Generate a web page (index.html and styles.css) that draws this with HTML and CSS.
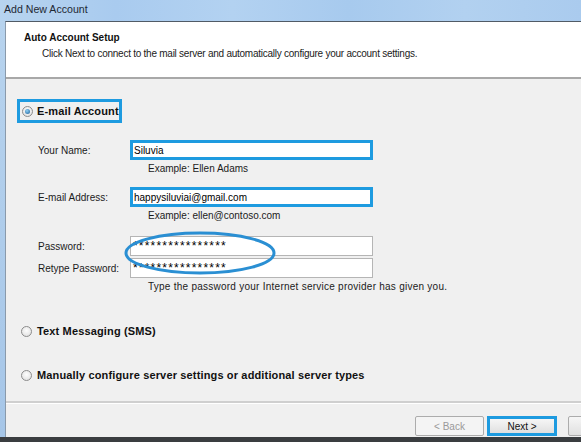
FILE: index.html
```html
<!DOCTYPE html>
<html>
<head>
<meta charset="utf-8">
<link rel="stylesheet" href="styles.css">
</head>
<body>
<div class="titlebar"><span class="title">Add New Account</span></div>
<div class="frame">
  <div class="dialog">
    <div class="header">
      <div class="h-title">Auto Account Setup</div>
      <div class="h-sub">Click Next to connect to the mail server and automatically configure your account settings.</div>
    </div>
    <div class="body">
      <div class="opt-email"><span class="radio checked"></span><span class="opt-label">E-mail Account</span></div>
      <div class="form">
        <div class="row r-name"><span class="lbl">Your Name:</span><span class="inp hl">Siluvia</span></div>
        <div class="hint">Example: Ellen Adams</div>
        <div class="row r-mail"><span class="lbl">E-mail Address:</span><span class="inp hl">happysiluviai@gmail.com</span></div>
        <div class="hint">Example: ellen@contoso.com</div>
        <div class="row r-pw"><span class="lbl">Password:</span><span class="inp pw">****************</span></div>
        <div class="row r-pw2"><span class="lbl">Retype Password:</span><span class="inp pw">****************</span></div>
        <div class="hint help">Type the password your Internet service provider has given you.</div>
        <svg class="ellipse" width="160" height="46" viewBox="0 0 160 46"><ellipse cx="80" cy="23" rx="74" ry="20" fill="none" stroke="#2a8fd3" stroke-width="3"/></svg>
      </div>
      <div class="opt opt-sms"><span class="radio"></span><span class="opt-label">Text Messaging (SMS)</span></div>
      <div class="opt opt-man"><span class="radio"></span><span class="opt-label">Manually configure server settings or additional server types</span></div>
    </div>
    <div class="footer">
      <span class="btn disabled">&lt; Back</span>
      <span class="btn next">Next &gt;</span>
      <span class="btn cut"></span>
    </div>
  </div>
</div>
<div class="desk"></div>
</body>
</html>
```

FILE: styles.css
```css
html, body {
  margin: 0;
  padding: 0;
}
body {
  width: 581px;
  height: 442px;
  overflow: hidden;
  background: #b9d5ef;
  font-family: "Liberation Sans", Arial, sans-serif;
  font-size: 10px;
  color: #1b1b1b;
  white-space: nowrap;
}
.titlebar {
  height: 21px;
  background: linear-gradient(90deg, #b7d4ef 0%, #a9cbef 20%, #b3d2f1 40%, #a7caee 60%, #b2d1f0 80%, #aacbee 100%);
  display: flex;
  align-items: center;
  padding-left: 4px;
  box-sizing: border-box;
}
.title {
  font-size: 10.6px;
  color: #1e2833;
  position: relative;
  top: -2px;
}
.frame {
  height: 416px;
  padding-left: 5px;
  background: linear-gradient(180deg, #b7d3ee, #a6c6e8);
}
.dialog {
  height: 416px;
  border-left: 1px solid #8a9aab;
  border-top: 1px solid #515b66;
  box-sizing: border-box;
  background: #f0f0f0;
  display: flex;
  flex-direction: column;
  overflow: hidden;
}
.header {
  background: #fff;
  height: 57px;
  padding: 8px 0 0 18px;
  box-sizing: border-box;
  border-bottom: 2px solid #a8a8a8;
  flex: none;
}
.h-title {
  font-weight: bold;
  font-size: 10px;
  line-height: 16px;
  color: #111;
}
.h-sub {
  line-height: 16px;
  padding-left: 18px;
  letter-spacing: -0.25px;
}
.body {
  height: 324px;
  position: relative;
  border-bottom: 2px solid #cfcfcf;
  box-sizing: border-box;
  flex: none;
}
.opt-email {
  margin: 20px 0 0 11px;
  width: 105px;
  height: 24px;
  box-sizing: border-box;
  border: 3px solid #1e9be0;
  display: flex;
  align-items: center;
  padding-left: 2px;
  gap: 4px;
}
.radio {
  width: 11px;
  height: 11px;
  border-radius: 50%;
  box-sizing: border-box;
  border: 1px solid #8c8c8c;
  background: radial-gradient(circle at 50% 40%, #fdfdfd, #dcdcdc);
  display: inline-block;
  flex: none;
  position: relative;
}
.radio.checked::after {
  content: "";
  position: absolute;
  left: 2px;
  top: 2px;
  width: 5px;
  height: 5px;
  border-radius: 50%;
  background: radial-gradient(circle at 40% 35%, #8fd0f5, #1b5d97);
}
.opt-label {
  font-weight: bold;
  font-size: 11px;
  letter-spacing: 0.15px;
  color: #111;
}
.form {
  position: relative;
  margin-top: 17px;
  padding-left: 32px;
}
.row {
  display: flex;
  align-items: center;
  height: 20px;
}
.lbl {
  width: 92px;
  flex: none;
}
.inp {
  width: 243px;
  height: 20px;
  box-sizing: border-box;
  background: #fff;
  border: 1px solid #b5b5b5;
  display: flex;
  align-items: center;
  padding-left: 2px;
  color: #000;
}
.inp.hl {
  border: 3px solid #1e9be0;
  padding-left: 1px;
}
.inp.pw {
  letter-spacing: 1.2px;
  font-size: 12px;
  padding-left: 2px;
  align-items: flex-start;
  line-height: 16px;
  padding-top: 1px;
}
.hint {
  padding-left: 110px;
  line-height: 16px;
  margin-top: 1px;
}
.hint.help {
  letter-spacing: 0.25px;
}
.r-mail {
  margin-top: 10px;
}
.r-pw {
  margin-top: 12px;
}
.r-pw2 {
  margin-top: 2px;
}
.ellipse {
  position: absolute;
  left: 114px;
  top: 90px;
}
.opt {
  display: flex;
  align-items: center;
  gap: 5px;
  padding-left: 15px;
  height: 16px;
}
.opt-sms {
  margin-top: 28px;
}
.opt-man {
  margin-top: 28px;
}
.footer {
  flex: 1;
  display: flex;
  padding: 12px 0 0 409px;
  gap: 3px;
  box-sizing: border-box;
  border-top: 1px solid #fff;
}
.btn {
  width: 69px;
  height: 20px;
  box-sizing: border-box;
  border: 1px solid #acacac;
  border-radius: 2px;
  background: linear-gradient(180deg, #f6f6f6, #e0e0e0);
  display: flex;
  align-items: center;
  justify-content: center;
  flex: none;
}
.btn.disabled {
  color: #9a9a9a;
  background: #f4f4f4;
}
.btn.next {
  width: 70px;
  border: 3px solid #1e9be0;
  border-radius: 0;
  color: #111;
}
.btn.cut {
  margin-left: 8px;
}
.desk {
  height: 5px;
  background: #3a3d40;
}
```
